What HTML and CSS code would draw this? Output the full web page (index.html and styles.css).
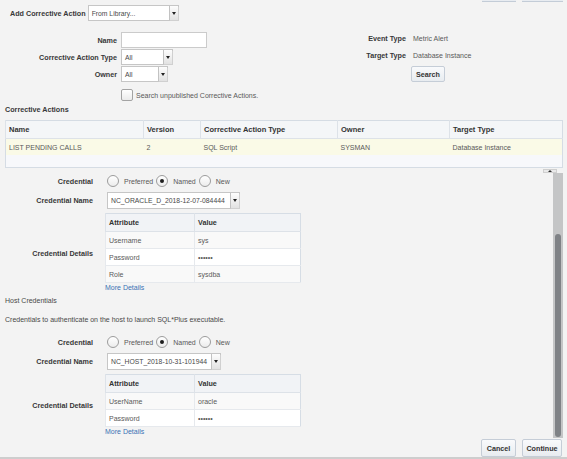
FILE: index.html
```html
<!DOCTYPE html>
<html>
<head>
<meta charset="utf-8">
<link rel="stylesheet" href="styles.css">
</head>
<body>
<div class="page">
  <div class="topstub"><span class="stub stub-a"></span><span class="stub stub-b"></span></div>

  <div class="add-row">
    <span class="lbl">Add Corrective Action</span>
    <div class="select sel-lib"><span class="sel-text">From Library...</span><span class="sel-btn"><i class="tri"></i></span></div>
  </div>

  <div class="search">
    <div class="search-left">
      <span class="lbl">Name</span>
      <div class="input"></div>
      <span class="lbl">Corrective Action Type</span>
      <div class="select sel-type"><span class="sel-text">All</span><span class="sel-btn"><i class="tri"></i></span></div>
      <span class="lbl">Owner</span>
      <div class="select sel-owner"><span class="sel-text">All</span><span class="sel-btn"><i class="tri"></i></span></div>
      <span></span>
      <div class="check"><span class="box"></span><span class="val">Search unpublished Corrective Actions.</span></div>
    </div>
    <div class="search-right">
      <span class="lbl">Event Type</span>
      <span class="val">Metric Alert</span>
      <span class="lbl">Target Type</span>
      <span class="val">Database Instance</span>
      <span></span>
      <button class="btn btn-search">Search</button>
    </div>
  </div>

  <div class="section-title">Corrective Actions</div>

  <table class="ca-table">
    <colgroup>
      <col class="c-name"><col class="c-ver"><col class="c-type"><col class="c-owner"><col class="c-target">
    </colgroup>
    <thead>
      <tr><th>Name</th><th>Version</th><th>Corrective Action Type</th><th>Owner</th><th>Target Type</th></tr>
    </thead>
    <tbody>
      <tr class="row-sel"><td>LIST PENDING CALLS</td><td>2</td><td>SQL Script</td><td>SYSMAN</td><td>Database Instance</td></tr>
      <tr class="row-empty"><td></td><td></td><td></td><td></td><td></td></tr>
    </tbody>
  </table>

  <div class="panel">
    <div class="panel-body">
      <div class="cred-grid">
        <span class="lbl">Credential</span>
        <div class="radios">
          <span class="ropt"><span class="radio"></span><span class="val">Preferred</span></span>
          <span class="ropt"><span class="radio on"><i class="dot"></i></span><span class="val">Named</span></span>
          <span class="ropt"><span class="radio"></span><span class="val">New</span></span>
        </div>
        <span class="lbl">Credential Name</span>
        <div class="select sel-cred1"><span class="sel-text">NC_ORACLE_D_2018-12-07-084444</span><span class="sel-btn"><i class="tri"></i></span></div>
        <span class="lbl">Credential Details</span>
        <div class="details">
          <table class="attr-table">
            <colgroup><col class="c-attr"><col class="c-val"></colgroup>
            <thead><tr><th>Attribute</th><th>Value</th></tr></thead>
            <tbody>
              <tr class="alt"><td>Username</td><td>sys</td></tr>
              <tr><td>Password</td><td>&bull;&bull;&bull;&bull;&bull;&bull;</td></tr>
              <tr class="alt"><td>Role</td><td>sysdba</td></tr>
            </tbody>
          </table>
          <a class="more">More Details</a>
        </div>
      </div>

      <div class="host-title">Host Credentials</div>
      <div class="host-intro">Credentials to authenticate on the host to launch SQL*Plus executable.</div>

      <div class="cred-grid cred-grid-2">
        <span class="lbl">Credential</span>
        <div class="radios">
          <span class="ropt"><span class="radio"></span><span class="val">Preferred</span></span>
          <span class="ropt"><span class="radio on"><i class="dot"></i></span><span class="val">Named</span></span>
          <span class="ropt"><span class="radio"></span><span class="val">New</span></span>
        </div>
        <span class="lbl">Credential Name</span>
        <div class="select sel-cred2"><span class="sel-text">NC_HOST_2018-10-31-101944</span><span class="sel-btn"><i class="tri"></i></span></div>
        <span class="lbl">Credential Details</span>
        <div class="details">
          <table class="attr-table">
            <colgroup><col class="c-attr"><col class="c-val"></colgroup>
            <thead><tr><th>Attribute</th><th>Value</th></tr></thead>
            <tbody>
              <tr class="alt"><td>UserName</td><td>oracle</td></tr>
              <tr><td>Password</td><td>&bull;&bull;&bull;&bull;&bull;&bull;</td></tr>
            </tbody>
          </table>
          <a class="more">More Details</a>
        </div>
      </div>
    </div>
    <div class="scrollbar">
      <span class="sb-up"><i class="sb-tri"></i></span>
      <span class="sb-thumb"></span>
    </div>
  </div>

  <div class="footer">
    <button class="btn btn-cancel">Cancel</button>
    <button class="btn btn-continue">Continue</button>
  </div>
</div>
</body>
</html>
```

FILE: styles.css
```css
html, body {
  margin: 0;
  padding: 0;
}
body {
  background: #f3f3f3;
  font-family: "Liberation Sans", Arial, Helvetica, sans-serif;
  font-size: 7px;
  color: #555;
}
.page {
  width: 567px;
  height: 459px;
  display: flex;
  flex-direction: column;
  overflow: hidden;
}
.lbl {
  font-weight: bold;
  font-size: 7.2px;
  color: #383838;
  white-space: nowrap;
}
.val {
  color: #595959;
  white-space: nowrap;
}

/* top stubs (bottom edges of buttons cut off) */
.topstub {
  height: 2px;
  display: flex;
  justify-content: flex-end;
  gap: 6px;
  padding-right: 4px;
}
.stub {
  height: 1px;
  background: #e8ecf1;
  border-bottom: 1px solid #c3ccd7;
}
.stub-a { width: 34px; }
.stub-b { width: 41px; }

/* add corrective action */
.add-row {
  display: flex;
  align-items: center;
  gap: 2px;
  margin-top: 3px;
  padding-left: 10px;
  height: 16px;
}

/* select box */
.select {
  display: flex;
  align-items: stretch;
  height: 16px;
  box-sizing: border-box;
  background: #fff;
  border: 1px solid #c6c6c6;
}
.sel-text {
  flex: 1;
  display: flex;
  align-items: center;
  padding-left: 3px;
  font-size: 6.8px;
  color: #484848;
  white-space: nowrap;
  overflow: hidden;
}
.sel-btn {
  width: 8px;
  border-left: 1px solid #c2c2c2;
  background: linear-gradient(#fdfdfd, #e2e2e2);
  display: flex;
  align-items: center;
  justify-content: center;
  box-shadow: 1px 1px 0 #d0d0d0;
}
.tri {
  width: 0;
  height: 0;
  border-left: 2px solid transparent;
  border-right: 2px solid transparent;
  border-top: 3px solid #222;
}
.sel-lib { width: 91px; }
.sel-type { width: 52px; }
.sel-owner { width: 47px; }
.sel-cred1 { width: 133px; margin-left: 2px; height: 17px; }
.sel-cred2 { width: 114px; margin-left: 2px; height: 17px; }

.input {
  width: 86px;
  height: 16px;
  box-sizing: border-box;
  background: #fff;
  border: 1px solid #cbcbcb;
}

/* search area */
.search {
  display: flex;
  align-items: flex-start;
  margin-top: 9px;
}
.search-left {
  width: 290px;
  padding-top: 2px;
  display: grid;
  grid-template-columns: 117px auto;
  grid-template-rows: 16px 16px 16px auto;
  column-gap: 4px;
  row-gap: 1px;
  align-items: center;
  justify-items: start;
}
.search-left .lbl { justify-self: end; }
.search-right {
  display: grid;
  grid-template-columns: 116px auto;
  grid-template-rows: 16px 16px 18px;
  column-gap: 7px;
  row-gap: 1px;
  align-items: center;
  justify-items: start;
}
.search-right .lbl { justify-self: end; }
.check {
  display: flex;
  align-items: center;
  gap: 3px;
  margin-top: 6px;
}
.box {
  width: 12px;
  height: 12px;
  box-sizing: border-box;
  border: 1px solid #a3a3a3;
  border-radius: 2px;
  background: linear-gradient(#ffffff, #ebebeb);
}

/* buttons */
.btn {
  font-family: inherit;
  font-weight: bold;
  font-size: 7.2px;
  color: #333;
  background: linear-gradient(#f9fafc, #e8ecf0);
  border: 1px solid #c5cdd7;
  border-radius: 2px;
  padding: 0;
  margin: 0;
  box-sizing: border-box;
}
.btn-search {
  width: 34px;
  height: 16px;
  margin-left: -2px;
  align-self: end;
}

.section-title {
  margin-top: 3px;
  height: 12px;
  line-height: 12px;
  padding-left: 5px;
  font-weight: bold;
  font-size: 7.2px;
  color: #383838;
}

/* corrective actions table */
.ca-table {
  margin-top: 4px;
  margin-left: 5px;
  width: 557px;
  border-collapse: collapse;
  table-layout: fixed;
  border: 1px solid #d5dce4;
}
.c-name { width: 138px; }
.c-ver { width: 57px; }
.c-type { width: 137px; }
.c-owner { width: 112px; }
.c-target { width: 113px; }
.ca-table th {
  height: 17px;
  padding: 0 3px;
  text-align: left;
  font-weight: bold;
  font-size: 7.5px;
  color: #333;
  background: #f4f6f8;
  border-left: 1px solid #dde2e8;
  border-bottom: 1px solid #dde2e8;
}
.ca-table td {
  padding: 0 3px;
  color: #595959;
  white-space: nowrap;
}
.row-sel td {
  height: 16px;
  background: #fafae7;
}
.row-empty td {
  height: 12px;
  background: #f7f8fb;
}

/* lower scroll panel */
.panel {
  flex: 1;
  min-height: 0;
  display: flex;
  overflow: hidden;
}
.panel-body {
  flex: 1;
  padding-top: 6px;
}
.cred-grid {
  display: grid;
  grid-template-columns: 93px 1fr;
  grid-template-rows: 14px 17px auto;
  column-gap: 12px;
  row-gap: 4px;
  align-items: center;
  justify-items: start;
}
.cred-grid .lbl { justify-self: end; }
.cred-grid-2 { margin-top: 9px; }

.radios {
  display: flex;
  align-items: center;
  margin-left: 2px;
}
.ropt {
  display: flex;
  align-items: center;
  gap: 5px;
  margin-right: 3px;
}
.radio {
  width: 12px;
  height: 12px;
  box-sizing: border-box;
  border: 1px solid #9c9c9c;
  border-radius: 50%;
  background: linear-gradient(#ffffff, #ececec);
  display: flex;
  align-items: center;
  justify-content: center;
}
.dot {
  width: 4px;
  height: 4px;
  border-radius: 50%;
  background: #1e1e1e;
}

.details {
  display: flex;
  flex-direction: column;
  align-items: flex-start;
}
.attr-table {
  width: 195px;
  border-collapse: collapse;
  table-layout: fixed;
  border: 1px solid #d6dde5;
}
.c-attr { width: 89px; }
.c-val { width: 106px; }
.attr-table th {
  height: 17px;
  padding: 0 3px;
  text-align: left;
  font-weight: bold;
  font-size: 7.2px;
  color: #333;
  background: #f1f3f6;
  border-left: 1px solid #dde2e8;
  border-bottom: 1px solid #dde2e8;
}
.attr-table td {
  height: 16px;
  padding: 0 3px;
  color: #595959;
  background: #ffffff;
  border-left: 1px solid #e6e9ed;
  border-bottom: 1px solid #e6e9ed;
}
.attr-table tr.alt td { background: #f9f9f9; }
.more {
  height: 10px;
  line-height: 10px;
  color: #3b72b4;
  cursor: pointer;
}

.host-title {
  margin-top: 2px;
  height: 12px;
  line-height: 12px;
  padding-left: 5px;
  color: #484848;
}
.host-intro {
  margin-top: 7px;
  height: 12px;
  line-height: 12px;
  padding-left: 5px;
  color: #484848;
}

/* scrollbar */
.scrollbar {
  position: relative;
  width: 10px;
  margin: 5px 4px 1px 0;
  background: #c4c5c6;
  display: flex;
  flex-direction: column;
}
.sb-up {
  position: absolute;
  left: -10px;
  top: -4px;
  width: 14px;
  height: 4px;
  box-sizing: border-box;
  background: #e9e9e9;
  border: 1px solid #cfcfcf;
  display: flex;
  align-items: center;
  justify-content: center;
}
.sb-tri {
  width: 0;
  height: 0;
  border-left: 2px solid transparent;
  border-right: 2px solid transparent;
  border-bottom: 2px solid #333;
}
.sb-thumb {
  flex: 1;
  margin: 61px 2px 1px 2px;
  background: #7f8286;
  border-radius: 3px;
}

/* footer */
.footer {
  height: 18px;
  display: flex;
  justify-content: flex-end;
  gap: 6px;
  padding-right: 5px;
  border-bottom: 2px solid #cdcdcd;
}
.btn-cancel { width: 35px; height: 18px; }
.btn-continue { width: 40px; height: 18px; }
```
